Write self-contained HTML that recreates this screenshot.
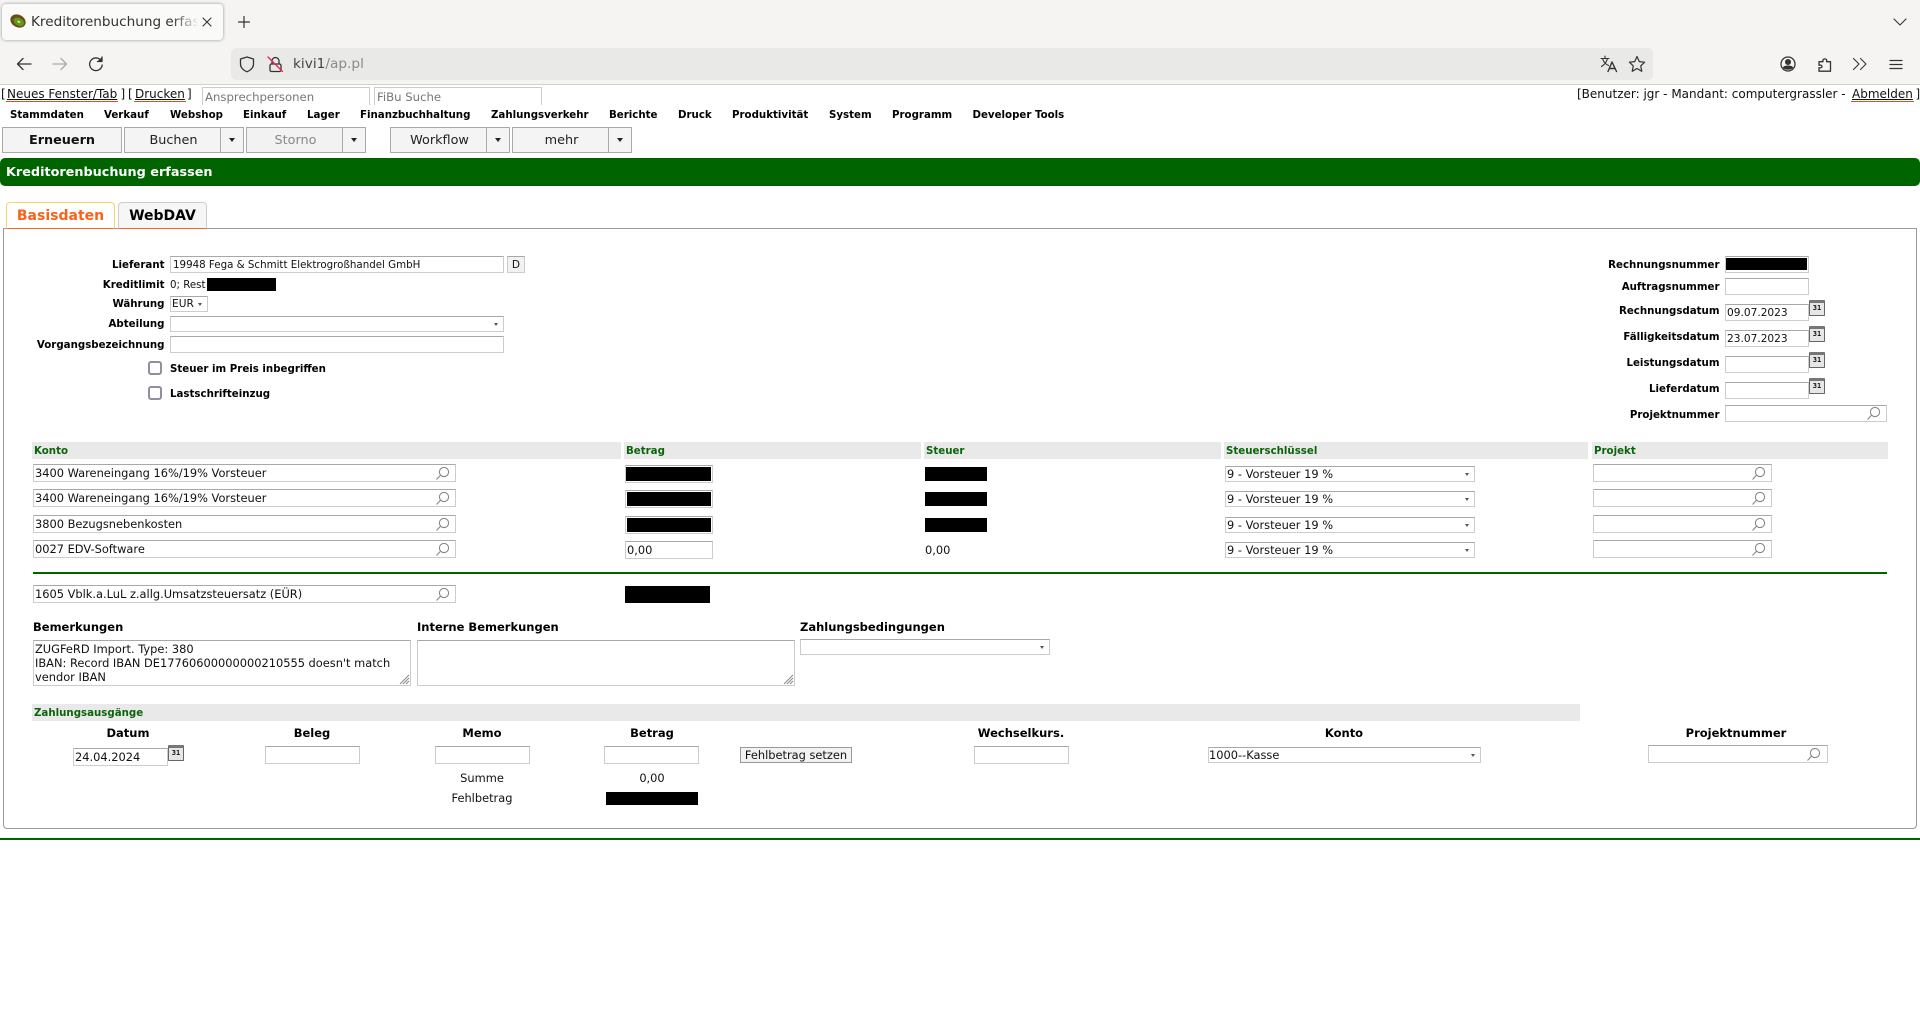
<!DOCTYPE html>
<html lang="de"><head><meta charset="utf-8"><title>Kreditorenbuchung erfassen</title>
<style>
html,body{margin:0;padding:0;background:#fff;width:1920px;height:1026px;overflow:hidden}
body{position:relative;font-family:"DejaVu Sans",sans-serif;color:#111;font-size:10.24px}
div,span,svg{position:absolute;box-sizing:border-box}
.t{white-space:nowrap;line-height:14px;height:14px}
.b{font-weight:bold;color:#000}
.c{text-align:center}
.m{font-weight:bold;font-size:10.24px;color:#000;top:108px}
.i{background:#fff;border:1px solid #ccc;border-top-color:#a8a8a8;font-size:10.6px;line-height:15px;padding-left:1px;white-space:nowrap;color:#111}
.rw{font-size:11.4px;line-height:16px}
.sl{font-size:11.4px;line-height:14px}
.k{background:#000}
.h{background:#e9e9e9;height:17px;top:442px;color:#0a640a;font-weight:bold;font-size:10.24px;line-height:18px;padding-left:2px}
.s:after{content:"";position:absolute;right:5px;top:6px;border:2.5px solid transparent;border-top:3.5px solid #555;border-bottom:0}
.btn{background:#f4f4f4;border:1px solid #aaa;font-size:12.8px;line-height:25px;text-align:center;color:#222;height:26px;top:127px;padding-left:2px}
.dd{padding:0}
.dd:after{content:"";position:absolute;left:8px;top:10px;border:3px solid transparent;border-top:4px solid #222;border-bottom:0}
.cal{width:16px;height:16px;background:#e6e6e6;border:1px solid #666;border-top:3px solid #777;font:bold 7px/11px "DejaVu Sans Mono",monospace;text-align:center;color:#111;border-radius:1px}
.lnk{color:#111;text-decoration:underline;text-decoration-color:#111;border-bottom:1px solid #d8531c;font-size:12px;top:87px;line-height:14px;height:15px;white-space:nowrap}
.tp{font-size:12px;top:87px}
.sv{fill:none;stroke:#888;stroke-width:1.1}
.ic{fill:none;stroke:#333;stroke-width:1.3;stroke-linecap:round;stroke-linejoin:round}
</style></head><body>

<!-- browser chrome -->
<div style="left:0;top:0;width:1920px;height:84px;background:#f5f4f2"></div>
<div style="left:0;top:84px;width:1920px;height:1px;background:#d3d0c9"></div>
<div style="left:2px;top:4px;width:221px;height:36px;background:#fafaf9;border-radius:4px;box-shadow:0 0 3px rgba(0,0,0,.4)"></div>
<svg style="left:9px;top:13px" width="18" height="16" viewBox="0 0 18 16"><ellipse cx="9" cy="8" rx="8" ry="6.2" transform="rotate(28 9 8)" fill="#6b4a1c"/><ellipse cx="9.8" cy="8.8" rx="5.6" ry="3.8" transform="rotate(28 9.8 8.8)" fill="#5f9a18"/><ellipse cx="9.8" cy="8.8" rx="1.6" ry="1" transform="rotate(28 9.8 8.8)" fill="#d8e6a0"/></svg>
<div class="t" style="left:31px;top:14px;font-size:13.6px;line-height:16px;height:16px;width:167px;overflow:hidden;color:#333">Kreditorenbuchung erfassen</div>
<div style="left:172px;top:10px;width:27px;height:24px;background:linear-gradient(to right,rgba(250,250,249,0),#fafaf9)"></div>
<svg class="ic" style="left:202px;top:17px;stroke-width:1.1" width="10" height="10"><path d="M1 1L9 9M9 1L1 9"/></svg>
<svg class="ic" style="left:238px;top:16px;stroke-width:1.2" width="12" height="12"><path d="M6 .5V11.5M.5 6H11.5"/></svg>
<svg class="ic" style="left:1893px;top:18px;stroke-width:1.1" width="14" height="8"><path d="M1 1L7 7L13 1"/></svg>
<svg class="ic" style="left:16px;top:57px" width="16" height="14"><path d="M15 7H1.5M7 1.5L1.5 7L7 12.5"/></svg>
<svg class="ic" style="left:52px;top:57px;stroke:#aaa" width="16" height="14"><path d="M1 7H14.5M9 1.5L14.5 7L9 12.5"/></svg>
<svg class="ic" style="left:88px;top:56px" width="16" height="16"><path d="M13 4.5A6.3 6.3 0 1 0 14.2 9"/><path d="M14 1V5.5H9.5" fill="#333"/></svg>
<div style="left:231px;top:48px;width:1422px;height:32px;background:#e9e9e8;border-radius:5px"></div>
<svg class="ic" style="left:239px;top:56px" width="16" height="17"><path d="M8 1L14.5 3V8C14.5 12 11 14.6 8 15.8C5 14.6 1.5 12 1.5 8V3Z"/></svg>
<svg class="ic" style="left:267px;top:56px" width="17" height="17"><rect x="3" y="8" width="11" height="7.5" rx="1.5"/><path d="M5 8V5A3.5 3.5 0 0 1 12 5V8"/><path d="M1 1L15.5 15.5" style="stroke:#e22850"/></svg>
<div class="t" style="left:293px;top:56px;font-size:13.7px;line-height:17px;height:17px;color:#444">kivi1<span style="position:static;color:#8b8b8b">/ap.pl</span></div>
<svg class="ic" style="left:1600px;top:55px;stroke-width:1.1" width="18" height="18"><path d="M1 3.5H9M5 1V3.5M2.5 3.5C3.5 7 5 9 8.5 10.5M7.5 3.5C6.5 7.5 4 10 1.5 11.5"/><path d="M8 16.5L12 7L16.5 16.5M9.5 13.5H15" style="stroke-width:1.4"/></svg>
<svg class="ic" style="left:1628px;top:55px;stroke-width:1.2" width="18" height="18"><path d="M9 1.5L11.3 6.6L16.6 7.2L12.7 10.9L13.8 16.3L9 13.5L4.2 16.3L5.3 10.9L1.4 7.2L6.7 6.6Z"/></svg>
<svg class="ic" style="left:1780px;top:56px" width="16" height="16"><circle cx="8" cy="8" r="7"/><circle cx="8" cy="6" r="2.4" fill="#333"/><path d="M3.6 11.5C5 9.7 11 9.7 12.4 11.5C10.5 13.5 5.5 13.5 3.6 11.5Z" fill="#333"/></svg>
<svg class="ic" style="left:1817px;top:56px" width="16" height="17"><path d="M2 5.5H6C4.5 2 11 1.5 9.5 5.5H13.5V15H2V11.5C6 12.5 6 8 2 9Z" transform="translate(0 .2)"/></svg>
<svg class="ic" style="left:1852px;top:57px;stroke-width:1.1" width="16" height="14"><path d="M1.5 1.5L7 7L1.5 12.5M8.5 1.5L14 7L8.5 12.5"/></svg>
<svg class="ic" style="left:1889px;top:59px" width="14" height="11"><path d="M1 1.5H13M1 5.5H13M1 9.5H13"/></svg>

<!-- top strip -->
<div class="t tp" style="left:1px">[</div>
<div class="lnk" style="left:6px;padding:0 1px">Neues Fenster/Tab</div>
<div class="t tp" style="left:120.5px">]</div>
<div class="t tp" style="left:128px">[</div>
<div class="lnk" style="left:134px;padding:0 1px">Drucken</div>
<div class="t tp" style="left:187px">]</div>
<div style="left:202px;top:87px;width:168px;height:18px;border:1px solid #ccc;border-bottom:0;font-size:11.7px;color:#777;padding:1px 0 0 2px;line-height:17px">Ansprechpersonen</div>
<div style="left:374px;top:87px;width:168px;height:18px;border:1px solid #ccc;border-bottom:0;font-size:11.7px;color:#777;padding:1px 0 0 2px;line-height:17px">FiBu Suche</div>
<div class="t tp" style="left:1577px">[Benutzer: jgr - Mandant: computergrassler -</div>
<div class="lnk" style="left:1851px;padding:0 1px">Abmelden</div>
<div class="t tp" style="left:1915.5px">]</div>

<div class="t m" style="left:10px">Stammdaten</div><div class="t m" style="left:104px">Verkauf</div><div class="t m" style="left:170px">Webshop</div><div class="t m" style="left:243px">Einkauf</div><div class="t m" style="left:307px">Lager</div><div class="t m" style="left:360px">Finanzbuchhaltung</div><div class="t m" style="left:491px">Zahlungsverkehr</div><div class="t m" style="left:609px">Berichte</div><div class="t m" style="left:678px">Druck</div><div class="t m" style="left:732px">Produktivität</div><div class="t m" style="left:829px">System</div><div class="t m" style="left:892px">Programm</div><div class="t m" style="left:972.5px">Developer Tools</div>

<div class="btn" style="left:2px;width:120px;font-weight:bold;color:#111;padding:0">Erneuern</div>
<div class="btn" style="left:124px;width:97px">Buchen</div><div class="btn dd" style="left:220px;width:24px"></div>
<div class="btn" style="left:246px;width:97px;color:#888;background:#f2f2f2">Storno</div><div class="btn dd" style="left:342px;width:24px"></div>
<div class="btn" style="left:390px;width:97px">Workflow</div><div class="btn dd" style="left:486px;width:24px"></div>
<div class="btn" style="left:512px;width:97px">mehr</div><div class="btn dd" style="left:608px;width:24px"></div>

<div style="left:0;top:158px;width:1920px;height:28px;background:#006400;border-radius:5px;color:#fff;font-weight:bold;font-size:12.8px;line-height:29px;padding-left:6px">Kreditorenbuchung erfassen</div>

<!-- tabs -->
<div style="left:3px;top:228px;width:1914px;height:601px;border:1px solid #999;border-radius:0 0 4px 4px;background:#fff"></div>
<div style="left:6px;top:202px;width:109px;height:27px;background:#fff;border:1px solid #f3d56b;border-bottom:1px solid #ef6b24;border-radius:4px 4px 0 0;color:#f9621a;font-weight:bold;font-size:14px;line-height:26px;text-align:center">Basisdaten</div>
<div style="left:118px;top:202px;width:89px;height:27px;background:#f6f6f6;border:1px solid #ccc;border-bottom:1px solid #ef6b24;border-radius:4px 4px 0 0;color:#000;font-weight:bold;font-size:14px;line-height:26px;text-align:center">WebDAV</div>

<!-- left form -->
<div class="t b" style="left:0;width:164.5px;text-align:right;top:258px">Lieferant</div>
<div class="i" style="left:170px;top:256px;width:334px;height:17px;font-size:10.28px;line-height:16px;padding-left:2px">19948 Fega &amp; Schmitt Elektrogroßhandel GmbH</div>
<div class="i" style="left:507px;top:256px;width:18px;height:17px;text-align:center;background:#f2f2f2;padding:0;line-height:16px">D</div>
<div class="t b" style="left:0;width:164.5px;text-align:right;top:278px">Kreditlimit</div>
<div class="t" style="left:170px;top:278px">0; Rest</div><div class="k" style="left:207px;top:278px;width:69px;height:13px"></div>
<div class="t b" style="left:0;width:164.5px;text-align:right;top:297px">Währung</div>
<div class="i s" style="left:170px;top:296px;width:38px;height:16px;line-height:15px">EUR</div>
<div class="t b" style="left:0;width:164.5px;text-align:right;top:317px">Abteilung</div>
<div class="i s" style="left:170px;top:316px;width:334px;height:16px"></div>
<div class="t b" style="left:0;width:164.5px;text-align:right;top:338px">Vorgangsbezeichnung</div>
<div class="i" style="left:170px;top:336px;width:334px;height:17px"></div>
<div style="left:148px;top:361px;width:14px;height:14px;border:2px solid #8f8f9d;border-radius:3px;background:#fff"></div>
<div class="t b" style="left:170px;top:362px">Steuer im Preis inbegriffen</div>
<div style="left:148px;top:386px;width:14px;height:14px;border:2px solid #8f8f9d;border-radius:3px;background:#fff"></div>
<div class="t b" style="left:170px;top:387px">Lastschrifteinzug</div>

<!-- right form -->
<div class="t b" style="left:1500px;width:219.5px;text-align:right;top:258px">Rechnungsnummer</div>
<div class="i" style="left:1725px;top:256px;width:84px;height:17px"></div><div class="k" style="left:1726px;top:258px;width:81px;height:12px"></div>
<div class="t b" style="left:1500px;width:219.5px;text-align:right;top:280px">Auftragsnummer</div>
<div class="i" style="left:1725px;top:278px;width:84px;height:17px"></div>
<div class="t b" style="left:1500px;width:219.5px;text-align:right;top:304px">Rechnungsdatum</div>
<div class="i" style="left:1725px;top:304px;width:84px;height:17px;line-height:16px">09.07.2023</div><div class="cal" style="left:1809px;top:300px">31</div>
<div class="t b" style="left:1500px;width:219.5px;text-align:right;top:330px">Fälligkeitsdatum</div>
<div class="i" style="left:1725px;top:330px;width:84px;height:17px;line-height:16px">23.07.2023</div><div class="cal" style="left:1809px;top:326px">31</div>
<div class="t b" style="left:1500px;width:219.5px;text-align:right;top:356px">Leistungsdatum</div>
<div class="i" style="left:1725px;top:356px;width:84px;height:17px"></div><div class="cal" style="left:1809px;top:352px">31</div>
<div class="t b" style="left:1500px;width:219.5px;text-align:right;top:382px">Lieferdatum</div>
<div class="i" style="left:1725px;top:382px;width:84px;height:17px"></div><div class="cal" style="left:1809px;top:378px">31</div>
<div class="t b" style="left:1500px;width:219.5px;text-align:right;top:408px">Projektnummer</div>
<div class="i" style="left:1725px;top:405px;width:162px;height:17px"></div>
<svg class="sv" style="left:1866px;top:406px" width="15" height="15"><circle cx="9" cy="6" r="4.6"/><path d="M5.5 9.2L1.5 13.5"/></svg>

<!-- table headers -->
<div class="h" style="left:32px;width:589px">Konto</div>
<div class="h" style="left:624px;width:297px">Betrag</div>
<div class="h" style="left:924px;width:297px">Steuer</div>
<div class="h" style="left:1224px;width:364px">Steuerschlüssel</div>
<div class="h" style="left:1592px;width:296px">Projekt</div>

<!-- rows -->
<div class="i rw" style="left:33px;top:464px;width:423px;height:18px">3400 Wareneingang 16%/19% Vorsteuer</div>
<div class="i rw" style="left:33px;top:489px;width:423px;height:18px">3400 Wareneingang 16%/19% Vorsteuer</div>
<div class="i rw" style="left:33px;top:515px;width:423px;height:18px">3800 Bezugsnebenkosten</div>
<div class="i rw" style="left:33px;top:540px;width:423px;height:18px">0027 EDV-Software</div>
<svg class="sv" style="left:435px;top:466px" width="15" height="15"><circle cx="9" cy="6" r="4.6"/><path d="M5.5 9.2L1.5 13.5"/></svg>
<svg class="sv" style="left:435px;top:491px" width="15" height="15"><circle cx="9" cy="6" r="4.6"/><path d="M5.5 9.2L1.5 13.5"/></svg>
<svg class="sv" style="left:435px;top:517px" width="15" height="15"><circle cx="9" cy="6" r="4.6"/><path d="M5.5 9.2L1.5 13.5"/></svg>
<svg class="sv" style="left:435px;top:542px" width="15" height="15"><circle cx="9" cy="6" r="4.6"/><path d="M5.5 9.2L1.5 13.5"/></svg>

<div class="i" style="left:625px;top:465px;width:88px;height:18px"></div><div class="k" style="left:626px;top:467px;width:85px;height:14px"></div>
<div class="i" style="left:625px;top:490px;width:88px;height:18px"></div><div class="k" style="left:627px;top:492px;width:84px;height:14px"></div>
<div class="i" style="left:625px;top:516px;width:88px;height:18px"></div><div class="k" style="left:627px;top:518px;width:84px;height:14px"></div>
<div class="i rw" style="left:625px;top:541px;width:88px;height:18px;line-height:17px">0,00</div>

<div class="k" style="left:925px;top:467px;width:62px;height:14px"></div>
<div class="k" style="left:925px;top:492px;width:62px;height:14px"></div>
<div class="k" style="left:925px;top:518px;width:62px;height:14px"></div>
<div class="t" style="left:925px;top:543px;font-size:11.4px">0,00</div>

<div class="i s sl" style="left:1225px;top:466px;width:250px;height:16px">9 - Vorsteuer 19 %</div>
<div class="i s sl" style="left:1225px;top:491px;width:250px;height:16px">9 - Vorsteuer 19 %</div>
<div class="i s sl" style="left:1225px;top:517px;width:250px;height:16px">9 - Vorsteuer 19 %</div>
<div class="i s sl" style="left:1225px;top:542px;width:250px;height:16px">9 - Vorsteuer 19 %</div>

<div class="i" style="left:1593px;top:464px;width:179px;height:18px"></div>
<div class="i" style="left:1593px;top:489px;width:179px;height:18px"></div>
<div class="i" style="left:1593px;top:515px;width:179px;height:18px"></div>
<div class="i" style="left:1593px;top:540px;width:179px;height:18px"></div>
<svg class="sv" style="left:1751px;top:466px" width="15" height="15"><circle cx="9" cy="6" r="4.6"/><path d="M5.5 9.2L1.5 13.5"/></svg>
<svg class="sv" style="left:1751px;top:491px" width="15" height="15"><circle cx="9" cy="6" r="4.6"/><path d="M5.5 9.2L1.5 13.5"/></svg>
<svg class="sv" style="left:1751px;top:517px" width="15" height="15"><circle cx="9" cy="6" r="4.6"/><path d="M5.5 9.2L1.5 13.5"/></svg>
<svg class="sv" style="left:1751px;top:542px" width="15" height="15"><circle cx="9" cy="6" r="4.6"/><path d="M5.5 9.2L1.5 13.5"/></svg>

<div style="left:33px;top:572px;width:1854px;height:2px;background:#006400"></div>

<div class="i rw" style="left:33px;top:585px;width:423px;height:18px">1605 Vblk.a.LuL z.allg.Umsatzsteuersatz (EÜR)</div>
<svg class="sv" style="left:435px;top:587px" width="15" height="15"><circle cx="9" cy="6" r="4.6"/><path d="M5.5 9.2L1.5 13.5"/></svg>
<div class="k" style="left:625px;top:586px;width:85px;height:17px"></div>

<!-- remarks -->
<div class="t b" style="left:33px;top:619.5px;font-size:11.5px">Bemerkungen</div>
<div class="t b" style="left:417px;top:619.5px;font-size:11.5px">Interne Bemerkungen</div>
<div class="t b" style="left:800px;top:619.5px;font-size:11.5px">Zahlungsbedingungen</div>
<div class="i rw" style="left:33px;top:640px;width:378px;height:46px;line-height:13.8px;padding-top:2px;white-space:normal">ZUGFeRD Import. Type: 380<br>IBAN: Record IBAN DE17760600000000210555 doesn't match<br>vendor IBAN</div>
<svg style="left:399px;top:674px" width="11" height="11" stroke="#888" stroke-width="1"><path d="M1 10L10 1M4 10L10 4M7 10L10 7"/></svg>
<div class="i" style="left:417px;top:640px;width:378px;height:46px"></div>
<svg style="left:783px;top:674px" width="11" height="11" stroke="#888" stroke-width="1"><path d="M1 10L10 1M4 10L10 4M7 10L10 7"/></svg>
<div class="i s" style="left:800px;top:639px;width:250px;height:16px"></div>

<!-- payments -->
<div class="h" style="left:32px;top:704px;width:1548px">Zahlungsausgänge</div>
<div class="t b c" style="left:78px;width:100px;top:726px;font-size:11.5px">Datum</div>
<div class="t b c" style="left:262px;width:100px;top:726px;font-size:11.5px">Beleg</div>
<div class="t b c" style="left:432px;width:100px;top:726px;font-size:11.5px">Memo</div>
<div class="t b c" style="left:602px;width:100px;top:726px;font-size:11.5px">Betrag</div>
<div class="t b c" style="left:961px;width:120px;top:726px;font-size:11.5px">Wechselkurs.</div>
<div class="t b c" style="left:1284px;width:120px;top:726px;font-size:11.5px">Konto</div>
<div class="t b c" style="left:1666px;width:140px;top:726px;font-size:11.5px">Projektnummer</div>

<div class="i rw" style="left:73px;top:748px;width:95px;height:18px;line-height:17px">24.04.2024</div><div class="cal" style="left:168px;top:745px">31</div>
<div class="i" style="left:265px;top:746px;width:95px;height:18px"></div>
<div class="i" style="left:435px;top:746px;width:95px;height:18px"></div>
<div class="i" style="left:604px;top:746px;width:95px;height:18px"></div>
<div class="i rw" style="left:740px;top:747px;width:112px;height:16px;background:#f2f2f2;border-color:#999;line-height:14px;text-align:center;padding:0">Fehlbetrag setzen</div>
<div class="i" style="left:974px;top:746px;width:95px;height:18px"></div>
<div class="i s sl" style="left:1208px;top:747px;width:273px;height:16px;padding:0">1000--Kasse</div>
<div class="i" style="left:1648px;top:745px;width:180px;height:18px"></div>
<svg class="sv" style="left:1806px;top:747px" width="15" height="15"><circle cx="9" cy="6" r="4.6"/><path d="M5.5 9.2L1.5 13.5"/></svg>

<div class="t c" style="left:432px;width:100px;top:771px;font-size:11.4px">Summe</div>
<div class="t c" style="left:602px;width:100px;top:771px;font-size:11.4px">0,00</div>
<div class="t c" style="left:432px;width:100px;top:791px;font-size:11.4px">Fehlbetrag</div>
<div class="k" style="left:606px;top:792px;width:92px;height:13px"></div>

<div style="left:0;top:838px;width:1920px;height:2px;background:#006400"></div>
</body></html>
